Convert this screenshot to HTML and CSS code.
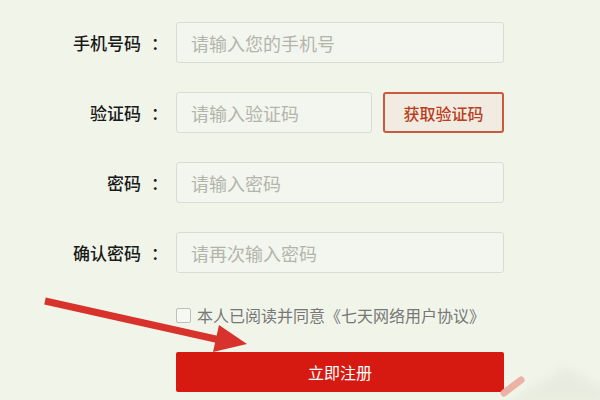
FILE: index.html
```html
<!DOCTYPE html>
<html lang="zh-CN">
<head>
<meta charset="utf-8">
<title>注册</title>
<link rel="stylesheet" href="styles.css">
</head>
<body>
<div class="page">
  <form class="form">
    <label class="label">手机号码<span class="colon">：</span></label>
    <input class="field" type="text" placeholder="请输入您的手机号">

    <label class="label">验证码<span class="colon">：</span></label>
    <div class="code-group">
      <input class="field field-code" type="text" placeholder="请输入验证码">
      <button class="btn-code" type="button">获取验证码</button>
    </div>

    <label class="label">密码<span class="colon">：</span></label>
    <input class="field" type="password" placeholder="请输入密码">

    <label class="label">确认密码<span class="colon">：</span></label>
    <input class="field" type="password" placeholder="请再次输入密码">
  </form>

  <div class="bottom">
    <div class="agree">
      <span class="checkbox"></span>
      <span class="agree-text">本人已阅读并同意《七天网络用户协议》</span>
    </div>
    <button class="btn-submit" type="button">立即注册</button>
  </div>

  <svg class="overlay" width="600" height="400" viewBox="0 0 600 400">
    <defs>
      <filter id="soft" x="-20%" y="-20%" width="140%" height="140%">
        <feGaussianBlur stdDeviation="4"/>
      </filter>
    </defs>
    <polygon class="mountain" filter="url(#soft)" points="505,404 540,382 567,366 590,380 604,388 604,404"/>
    <line class="pink" x1="504" y1="393" x2="521" y2="380"/>
    <line class="arrow-line" x1="45" y1="301" x2="220" y2="340"/>
    <polygon class="arrow-head" points="219,325 247,344 213,352"/>
  </svg>
</div>
</body>
</html>
```

FILE: styles.css
```css
html, body {
  margin: 0;
  padding: 0;
}

body {
  width: 600px;
  height: 400px;
  overflow: hidden;
  background: #f1f5e9;
  font-family: "Noto Sans CJK SC", "Noto Sans", sans-serif;
  color: #222;
}

.page {
  position: relative;
  width: 600px;
  height: 400px;
}

.form {
  display: grid;
  grid-template-columns: 176px 328px;
  grid-auto-rows: 41px;
  row-gap: 29px;
  padding-top: 22px;
  margin: 0;
}

.label {
  display: flex;
  align-items: center;
  justify-content: flex-end;
  padding-right: 8px;
  font-size: 17px;
  font-weight: 500;
  color: #1a1a1a;
}

.colon {
  margin-left: 10px;
}

.field {
  box-sizing: border-box;
  width: 100%;
  height: 41px;
  margin: 0;
  border: 1px solid #d9dcd1;
  border-radius: 3px;
  background: #f3f6ee;
  padding: 0 14px;
  font-family: inherit;
  font-size: 18px;
  color: #333;
  outline: none;
}

.field::placeholder {
  color: #b3b5ad;
}

.code-group {
  display: flex;
  gap: 11px;
}

.field-code {
  width: 196px;
  flex: none;
}

.btn-code {
  box-sizing: border-box;
  width: 122px;
  height: 41px;
  margin: 0;
  padding: 0;
  border: 2px solid #c95a40;
  border-radius: 3px;
  background: #f2ebe1;
  font-family: inherit;
  font-size: 16px;
  font-weight: 500;
  color: #b9401f;
}

.bottom {
  display: flex;
  flex-direction: column;
  padding-left: 176px;
}

.agree {
  display: flex;
  align-items: center;
  height: 16px;
  margin-top: 34px;
}

.checkbox {
  box-sizing: border-box;
  width: 15px;
  height: 15px;
  border: 1px solid #bfc0ba;
  border-radius: 2px;
  background: #f6f8f2;
  margin-right: 6px;
}

.agree-text {
  font-size: 16px;
  line-height: 16px;
  color: #777;
}

.btn-submit {
  box-sizing: border-box;
  width: 328px;
  height: 40px;
  margin: 29px 0 0;
  padding: 0;
  border: none;
  border-radius: 2px;
  background: #d61a12;
  font-family: inherit;
  font-size: 16px;
  color: #fff;
}

.overlay {
  position: absolute;
  left: 0;
  top: 0;
  pointer-events: none;
}

.mountain {
  fill: #dfe3d6;
  opacity: 0.45;
}

.pink {
  stroke: #eab3a5;
  stroke-width: 7;
  stroke-linecap: round;
}

.arrow-line {
  stroke: #d8322c;
  stroke-width: 7;
  stroke-linecap: butt;
}

.arrow-head {
  fill: #d8322c;
}
```
